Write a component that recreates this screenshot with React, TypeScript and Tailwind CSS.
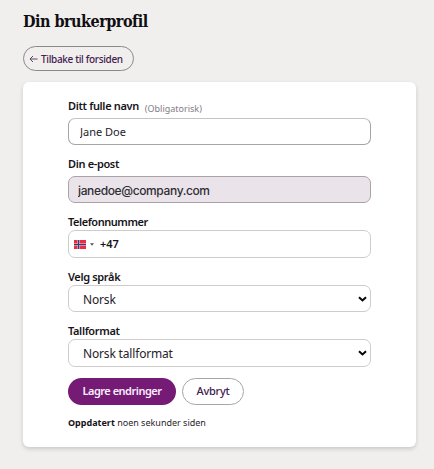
import { ReactNode } from 'react';
import clsx from 'clsx';

const languages = ['Norsk', 'English'];
const numberFormats = ['Norsk tallformat', 'Engelsk tallformat'];

function Label({ htmlFor, className, children }: { htmlFor: string; className?: string; children: ReactNode }) {
  return (
    <label htmlFor={htmlFor} className={clsx('block h-4 text-[11px] leading-4 font-semibold tracking-[-0.35px] whitespace-nowrap text-[#17131a]', className)}>
      {children}
    </label>
  );
}

function NorwegianFlag() {
  return (
    <svg width="12" height="9" viewBox="0 0 12 9" className="shrink-0">
      <rect width="12" height="9" fill="#ee2b43" />
      <path d="M4.5 0V9M0 4.5H12" stroke="#d9dbe8" strokeWidth="2.2" />
      <path d="M4.5 0V9M0 4.5H12" stroke="#24447e" strokeWidth="1.2" />
    </svg>
  );
}

function Select({ id, options, className }: { id: string; options: string[]; className?: string }) {
  return (
    <div className="relative">
      <select
        id={id}
        className={clsx('block w-full appearance-none rounded-[7px] border border-[#cfcccc] bg-white pt-0.5 pl-3.5 text-[12px] tracking-[-0.17px] text-[#26222a] outline-none', className)}
      >
        {options.map((option) => (
          <option key={option}>{option}</option>
        ))}
      </select>
      <svg width="9" height="6" viewBox="0 0 9 6" fill="none" className="pointer-events-none absolute top-[11px] right-1">
        <path d="M1 1.2L4.5 4.4L8 1.2" stroke="#050505" strokeWidth="2" />
      </svg>
    </div>
  );
}

export default function App() {
  return (
    <main className="h-[469px] w-[434px] bg-[#f0efed] pt-[10px] pl-[23px] font-['Noto_Sans',sans-serif]">
      <h1 className="h-6 font-['DejaVu_Serif_Condensed','DejaVu_Serif',serif] text-[16px] leading-6 font-bold tracking-[-0.5px] whitespace-nowrap text-[#100e12]">
        Din brukerprofil
      </h1>

      <button className="mt-3 flex h-[25px] w-[111px] items-center rounded-full border border-[#8f888b] pl-[5px] text-[10px] font-medium whitespace-nowrap text-[#42204d]">
        <svg width="9" height="8" viewBox="0 0 9 8" fill="none" className="mr-[3px] shrink-0">
          <path d="M8.5 4H1M4 1L1 4L4 7" stroke="#54305e" strokeWidth="0.9" />
        </svg>
        <span className="pt-px tracking-[-0.33px]">Tilbake til forsiden</span>
      </button>

      {/* Profile form */}
      <section className="mt-[11px] h-[365px] w-[393px] rounded-md bg-white px-[45px] pt-4 shadow-[0_2px_4px_rgba(0,0,0,0.16)]">
        <div className="flex">
          <Label htmlFor="name">Ditt fulle navn</Label>
          <span className="ml-1.5 h-4 pt-[3px] text-[9px] leading-4 text-[#827d84]">(Obligatorisk)</span>
        </div>
        <input
          id="name"
          defaultValue="Jane Doe"
          className="mt-1 block h-[27px] w-[303px] rounded-[7px] border border-[#aaa3a5] border-t-[#c8c2c2] pl-[11px] text-[11px] text-[#25212a] outline-none"
        />

        <Label htmlFor="email" className="mt-[11px]">Din e-post</Label>
        <input
          id="email"
          readOnly
          defaultValue="janedoe@company.com"
          className="mt-1 block h-[27px] w-[303px] rounded-[7px] border border-[#aaa3a5] bg-[#eae4ea] pt-0.5 pl-[9px] font-[Inter,sans-serif] text-[12px] font-medium tracking-[-0.37px] text-[#302d34] outline-none"
        />

        <Label htmlFor="phone" className="mt-[11px] tracking-[-0.45px]">Telefonnummer</Label>
        <div className="flex h-7 w-[303px] items-center rounded-[7px] border border-[#cfcccc] pl-[5px]">
          <NorwegianFlag />
          <svg width="4" height="3" viewBox="0 0 4 3" className="mr-[6px] ml-1 shrink-0">
            <path d="M0 0.3H4L2 2.7Z" fill="#555" />
          </svg>
          <input id="phone" defaultValue="+47" className="w-60 text-[11px] font-semibold text-[#17131a] outline-none" />
        </div>

        <Label htmlFor="language" className="mt-[11px]">Velg språk</Label>
        <div className="w-[303px]">
          <Select id="language" options={languages} className="h-[27px]" />
        </div>

        <Label htmlFor="format" className="mt-[11px]">Tallformat</Label>
        <div className="w-[303px]">
          <Select id="format" options={numberFormats} className="h-7" />
        </div>

        <div className="mt-[11px] flex gap-1.5">
          <button className="h-[27px] w-[108px] rounded-full bg-[#751a75] text-[11px] font-semibold tracking-[-0.5px] whitespace-nowrap text-[#fbeffb]">
            Lagre endringer
          </button>
          <button className="h-[27px] w-[62px] rounded-full border border-[#aaa3a5] text-[11px] font-medium tracking-[-0.25px] whitespace-nowrap text-[#42204d]">
            Avbryt
          </button>
        </div>

        <p className="mt-[10px] text-[9px] leading-4 whitespace-nowrap text-[#29252c]">
          <b className="font-bold text-[#17131a]">Oppdatert</b> noen sekunder siden
        </p>
      </section>
    </main>
  );
}
